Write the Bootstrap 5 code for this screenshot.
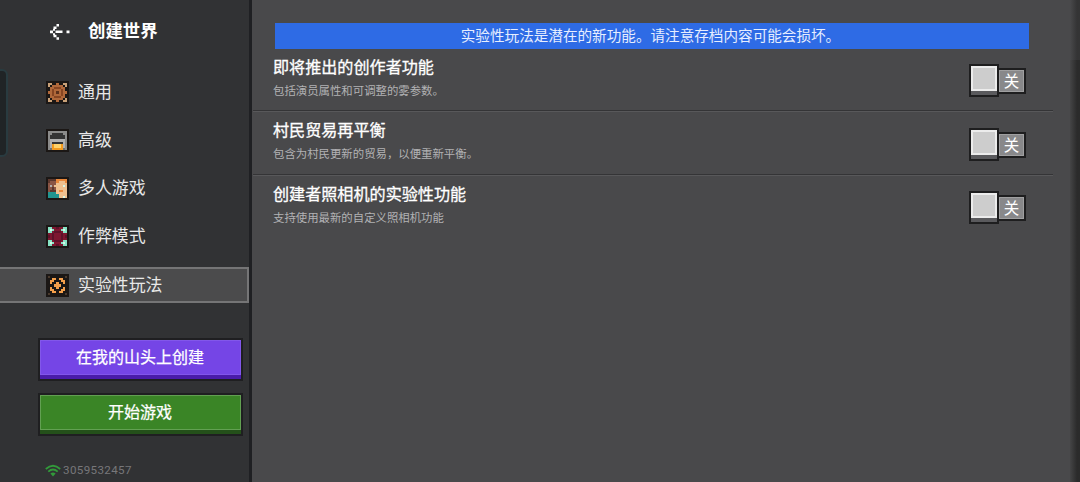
<!DOCTYPE html>
<html lang="zh-CN">
<head>
  <meta charset="UTF-8" />
  <title>创建世界</title>
  <meta name="viewport" content="width=device-width, initial-scale=1" />
  <link href="https://cdn.jsdelivr.net/npm/bootstrap@5.3.3/dist/css/bootstrap.min.css" rel="stylesheet" />
  <style>
    body { background: #49494b; color: #fff; font-family: "Noto Sans CJK SC", sans-serif; height: 482px; }
    .side { width: 252px; background: #313234; border-right: 3px solid #1f2023; }
    .side-title { height: 64px; padding: 0 0 1px 50px; font-size: 17.4px; font-weight: 700; }
    .side-title svg { width: 20px; height: 18px; margin-right: 18px; }
    .side-menu { padding-top: 10px; }
    .side-menu a { height: 36px; margin-bottom: 12.3px; padding-left: 46px; gap: 9px; font-size: 16.9px; line-height: 1; color: #e8e8e8; text-decoration: none; }
    .side-menu a.active { background: #4b4b4c; border: 2px solid #757576; border-left: 0; }
    .side-menu svg { width: 23px; height: 23px; }
    .side-title span, .side-menu span, .game-btn span { position: relative; top: -1px; }
    .game-btn { width: 205px; height: 43px; margin-left: 38px; padding: 0 1px 5px 0; border: 2px solid #1f1f21; border-radius: 0; font-size: 16px; line-height: 1; color: #fff; -webkit-text-stroke: .25px #fff; }
    .game-btn:hover { color: #fff; }
    .btn-realm { margin-top: 23px; background: #7545e6; box-shadow: inset 0 -4px #4a1caa, inset 0 0 0 1px #8257ea, inset 0 -5px #8257ea; }
    .btn-play { margin-top: 12px; background: #3a8526; box-shadow: inset 0 -4px #24501a, inset 0 -5px #62a052, inset 0 0 0 1px #62a052; }
    .account { margin: 27px 0 0 45px; gap: 2px; font: 11.6px/14px Roboto, sans-serif; color: #77777a; letter-spacing: .36px; }
    .notch { left: -8px; top: 69px; width: 16px; height: 88px; background: #202426; border: 2px solid #293b40; border-radius: 6px; }
    .notice { height: 25.5px; margin: 23px 41px 0 23px; background: #2e6be5; font-size: 14.6px; line-height: 24px; color: #e6eeff; text-indent: -3px; }
    .option { height: 63.5px; margin: 0 17px 0 1px; padding: 0 27px 0 20px; border-bottom: 1px solid #58585a; box-shadow: inset 0 -1px #343436; }
    .option:last-child { border: 0; box-shadow: none; }
    .option h2 { margin: 7px 0 6px; font-size: 16.1px; line-height: 21px; font-weight: 400; -webkit-text-stroke: .3px #fff; }
    .option p { margin: 0; font-size: 11.4px; line-height: 14px; color: #b2b2b4; }
    .toggle { margin-top: 15.5px; }
    .toggle .knob { width: 30px; height: 33px; border: 2px solid #1e1e1f; background: #cdcdcd; box-shadow: inset 0 -4px #5a5a5d, inset 0 0 0 2px #ececec, inset 0 -6px #ececec; }
    .toggle .state { width: 29px; height: 26px; margin: 4px 0 0 -2px; border: 2px solid #1e1e1f; background: #88888a; box-shadow: inset 0 0 0 1px #a0a0a1; font-size: 15.5px; line-height: 20px; }
    .edge { width: 10px; background: linear-gradient(90deg, #49494b, #343435 70%); }
    .edge div { height: 422px; margin-top: 60px; background: linear-gradient(90deg, #454546, #2b2b2b 70%); }
  </style>
</head>
<body class="d-flex overflow-hidden position-relative">
  <div class="notch position-absolute"></div>

  <!-- Sidebar -->
  <aside class="side d-flex flex-column flex-shrink-0">
    <div class="side-title d-flex align-items-center">
      <svg viewBox="0 0 20 18" fill="#fff">
        <path d="M6.500 1h2.500v2.500h-2.500zM3.500 3.500h3v2.500h-3zM0 7.500h3v2.800h-3zM5.500 7.500h7v2.500h-7zM16.500 7.500h3v2.800h-3zM3 5.800h2v2h-2zM3 10.200h2v2h-2zM3.500 11.700h3v2.500h-3zM6.500 14.200h2.500v2.500h-2.500z"/>
      </svg>
      <span>创建世界</span>
    </div>
    <nav class="side-menu d-flex flex-column">
      <a href="#" class="d-flex align-items-center"><svg data-sprite="general"></svg><span>通用</span></a>
      <a href="#" class="d-flex align-items-center"><svg data-sprite="furnace"></svg><span>高级</span></a>
      <a href="#" class="d-flex align-items-center"><svg data-sprite="players"></svg><span>多人游戏</span></a>
      <a href="#" class="d-flex align-items-center"><svg data-sprite="cheats"></svg><span>作弊模式</span></a>
      <a href="#" class="active d-flex align-items-center"><svg data-sprite="lamp"></svg><span>实验性玩法</span></a>
    </nav>
    <button class="btn game-btn btn-realm"><span>在我的山头上创建</span></button>
    <button class="btn game-btn btn-play"><span>开始游戏</span></button>
    <div class="account d-flex align-items-center">
      <svg width="16" height="13" viewBox="0 0 16 13" fill="none" stroke="#329a3a" stroke-width="1.8">
        <path d="M.8 5Q8-1.600 15.200 5M3.300 7.600Q8 3.400 12.700 7.600"/>
        <path d="M8 12.500L5.400 9.600Q8 7.400 10.600 9.600z" fill="#329a3a" stroke="none"/>
      </svg>
      <span>3059532457</span>
    </div>
  </aside>

  <!-- Experiments -->
  <main class="flex-grow-1">
    <div class="notice text-center">实验性玩法是潜在的新功能。请注意存档内容可能会损坏。</div>
    <section>
      <div class="option d-flex justify-content-between">
        <div><h2>即将推出的创作者功能</h2><p>包括演员属性和可调整的雾参数。</p></div>
        <div class="toggle d-flex align-items-start"><div class="knob"></div><div class="state text-center">关</div></div>
      </div>
      <div class="option d-flex justify-content-between">
        <div><h2>村民贸易再平衡</h2><p>包含为村民更新的贸易，以便重新平衡。</p></div>
        <div class="toggle d-flex align-items-start"><div class="knob"></div><div class="state text-center">关</div></div>
      </div>
      <div class="option d-flex justify-content-between">
        <div><h2>创建者照相机的实验性功能</h2><p>支持使用最新的自定义照相机功能</p></div>
        <div class="toggle d-flex align-items-start"><div class="knob"></div><div class="state text-center">关</div></div>
      </div>
    </section>
  </main>
  <div class="edge flex-shrink-0 overflow-hidden"><div></div></div>

  <script src="https://cdn.jsdelivr.net/npm/bootstrap@5.3.3/dist/js/bootstrap.bundle.min.js"></script>
  <script>
    // One letter per pixel, "." is the dark frame
    const palette = {
      '.': '#1b1715', a: '#b0683a', b: '#874522', c: '#c9a178', d: '#5c301b', g: '#8b8b8a', h: '#6f7070', k: '#343434',
      w: '#b0b0b0', y: '#ffd36b', o: '#f39b20', p: '#8a5545', q: '#5c382e', s: '#efc08f', t: '#219590', e: '#e9883b',
      m: '#86e3c4', n: '#d8f7e8', r: '#7d1730', v: '#5c1229', z: '#f5a04b', x: '#4a3a2d'
    };
    const sprites = {
      general: ['...........', '.cc..a..cc.', '.c.aaaaa.c.', '..aabbbaa..', '..abaaaba..', '.aabadabaa.', '..abaaaba..', '..aabbbaa..', '.c.aaaaa.c.', '.cc..a..cc.', '...........'],
      furnace: ['...........', '.ggggggggg.', '.ggkkkkkgg.', '.gkkkkkkkg.', '.gkkkkkkkg.', '.gwwwwwwwg.', '.gwkkkkkwg.', '.gwoyyyowg.', '.gwoyyyowg.', '.ghooooohg.', '...........'],
      players: ['...........', '.qqqqeeeee.', '.qpppessse.', '.ppppsssss.', '.pwpssssns.', '.ppqpsssss.', '.pqqqseess.', '.ttttsssss.', '.tttttssss.', '.tttttssns.', '...........'],
      cheats: ['...........', '.mmrrvrrmm.', '.mnmrrrmnm.', '.mmrvvvrmm.', '.rrvrrrvrr.', '.vrvrrrvrv.', '.rrvrrrvrr.', '.mmrvvvrmm.', '.mnmrrrmnm.', '.mmrrvrrmm.', '...........'],
      lamp: ['...........', '.x.......x.', '...zz.zz...', '..zz...zz..', '..z..z..z..', '....zzz....', '..z..z..z..', '..zz...zz..', '...zz.zz...', '.x.......x.', '...........']
    };
    document.querySelectorAll('[data-sprite]').forEach(svg => {
      svg.setAttribute('viewBox', '0 0 11 11');
      svg.setAttribute('shape-rendering', 'crispEdges');
      svg.innerHTML = sprites[svg.dataset.sprite].map((row, y) =>
        [...row].map((c, x) => `<rect x="${x}" y="${y}" width="1" height="1" fill="${palette[c]}"/>`).join('')
      ).join('');
    });
  </script>
</body>
</html>
